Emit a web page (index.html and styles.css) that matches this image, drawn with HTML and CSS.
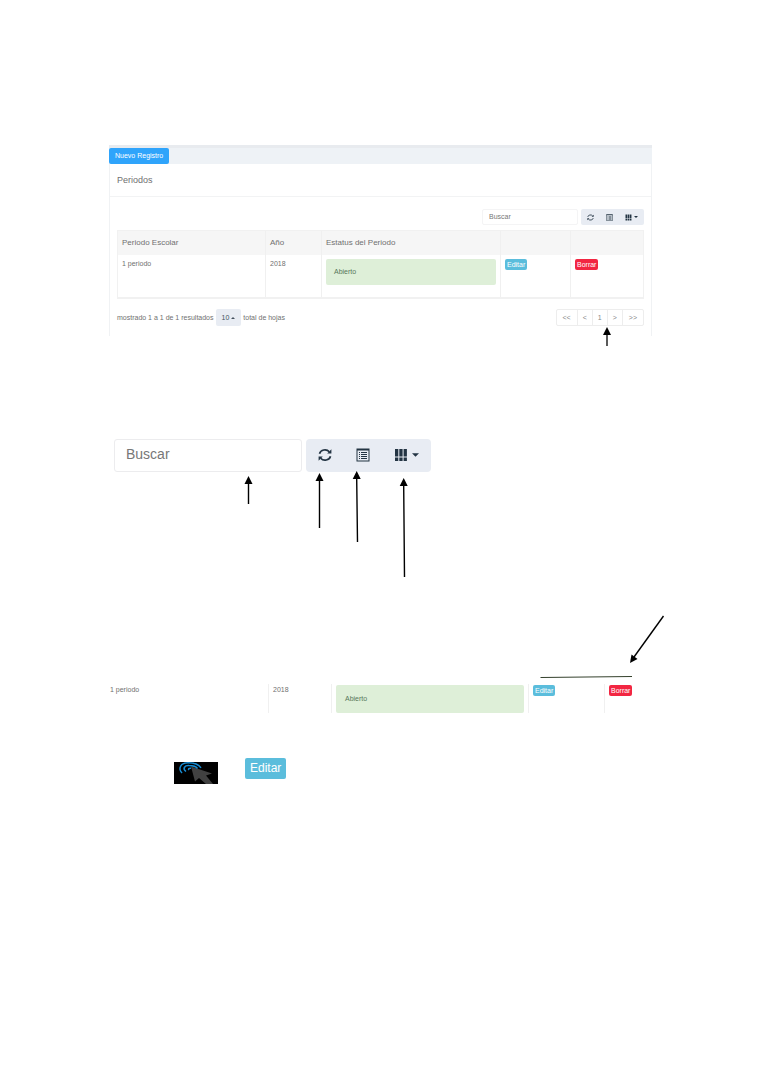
FILE: index.html
```html
<!DOCTYPE html>
<html lang="es">
<head>
<meta charset="utf-8">
<title>Periodos</title>
<link rel="stylesheet" href="styles.css">
</head>
<body>
<svg class="defs" aria-hidden="true">
  <symbol id="refresh" viewBox="0 0 14 14">
    <path d="M1.500 5.800A5.600 5.200 0 0 1 11.300 3.800M12.500 8.200A5.600 5.200 0 0 1 2.700 10.200" fill="none" stroke="currentColor" stroke-width="1.700"/>
    <path d="M13.400 1.300v4.200H9.200zM.6 12.700V8.500h4.200z" fill="currentColor"/>
  </symbol>
  <symbol id="list" viewBox="0 0 14 14">
    <path d="M.5 .5h13v13H.5zM1.500 2.500v10h11v-10z" fill="currentColor" fill-rule="evenodd"/>
    <path d="M3 4h1v1H3zM5 4h6v1H5zM3 6h1v1H3zM5 6h6v1H5zM3 8h1v1H3zM5 8h6v1H5zM3 10h1v1H3zM5 10h6v1H5z" fill="currentColor"/>
  </symbol>
  <symbol id="grid" viewBox="0 0 14 14">
    <path d="M1 1h3.300v7.500H1zM5.300 1h3.300v7.500H5.300zM9.600 1h3.300v7.500H9.600zM1 9.500h3.300V13H1zM5.300 9.500h3.300V13H5.300zM9.600 9.500h3.300V13H9.600z" fill="currentColor"/>
  </symbol>
  <symbol id="caret" viewBox="0 0 8 4"><path d="M0 0h8L4 4z" fill="currentColor"/></symbol>
</svg>
<main class="page">
  <section class="panel">
    <div class="topbar"><button class="new" type="button">Nuevo Registro</button></div>
    <div class="card">
      <h1 class="title">Periodos</h1>
      <div class="content">
        <div class="toolbar">
          <input class="search" type="text" placeholder="Buscar" aria-label="Buscar">
          <div class="tools">
            <button type="button" aria-label="Actualizar"><svg class="icon"><use href="#refresh"/></svg></button>
            <button type="button" aria-label="Cambiar vista"><svg class="icon"><use href="#list"/></svg></button>
            <button type="button" aria-label="Columnas"><svg class="icon"><use href="#grid"/></svg><svg class="caret"><use href="#caret"/></svg></button>
          </div>
        </div>
        <table class="grid">
          <thead><tr><th class="c1">Periodo Escolar</th><th class="c2">Año</th><th class="c3">Estatus del Periodo</th><th class="c4"></th><th class="c5"></th></tr></thead>
          <tbody><tr><td>1 periodo</td><td>2018</td><td><div class="status">Abierto</div></td><td><button class="tag edit" type="button">Editar</button></td><td><button class="tag delete" type="button">Borrar</button></td></tr></tbody>
        </table>
        <div class="footer">
          <span>mostrado 1 a 1 de 1 resultados</span>
          <button class="size" type="button">10<svg class="caret up"><use href="#caret"/></svg></button>
          <span>total de hojas</span>
          <nav class="pages" aria-label="Páginas"><a class="end" href="#">&lt;&lt;</a><a href="#">&lt;</a><a href="#">1</a><a href="#">&gt;</a><a class="end" href="#">&gt;&gt;</a></nav>
        </div>
      </div>
    </div>
    <svg class="arrow page-arrow" viewBox="0 0 10 20"><path d="M5 19V5" stroke="#000" stroke-width="1.3"/><path d="M5 0l4 8H1z"/></svg>
  </section>

  <section class="controls">
    <input class="search" type="text" placeholder="Buscar" aria-label="Buscar periodo">
    <div class="tools">
      <button type="button" aria-label="Actualizar"><svg class="icon"><use href="#refresh"/></svg></button>
      <button type="button" aria-label="Cambiar vista"><svg class="icon"><use href="#list"/></svg></button>
      <button type="button" aria-label="Columnas"><svg class="icon"><use href="#grid"/></svg><svg class="caret"><use href="#caret"/></svg></button>
    </div>
    <svg class="arrow control-arrows" viewBox="0 0 180 110">
      <path d="M8.500 33V12M79.500 57V10M117.500 71L116.700 8M164.500 106L163.700 15" fill="none" stroke="#000" stroke-width="1.4"/>
      <path d="M8.500 5l4 8h-8zM79.500 2l4 8h-8zM116.700 0l4 8h-8zM163.700 7l4 8h-8z"/>
    </svg>
  </section>

  <section class="sample">
    <table class="row">
      <tbody><tr><td class="r1">1 periodo</td><td class="r2">2018</td><td class="r3"><div class="status">Abierto</div></td><td class="r4"><button class="tag edit" type="button">Editar</button></td><td class="r5"><button class="tag delete" type="button">Borrar</button></td></tr></tbody>
    </table>
    <svg class="arrow row-arrow" viewBox="0 0 130 65">
      <path d="M127.500 1L98 42" stroke="#000" stroke-width="1.4"/>
      <path d="M94 48l1.500-8.500 6 4.500z"/>
      <path d="M4.500 62.500L96 61.500" stroke="#34412c" stroke-width="1"/>
    </svg>
  </section>

  <section class="action">
    <svg class="click" viewBox="0 0 44 22" role="img" aria-label="Clic">
      <path d="M0 0h44v22H0z"/>
      <path d="M17 4.500l4 15 4-3.500 7 6h7l-7-8.500 6-2z" fill="#414141"/>
      <g fill="none" stroke="#168bd2" stroke-width="1.500">
        <path d="M8 11C3.500 6 7 .8 14 .8c6 0 11 2 13 5"/>
        <path d="M12 9.500C8 6.500 11 3.200 15 3.500c4 0 7 1 8.500 3"/>
        <path d="M15 8c-1-1-.5-2 2-1.800"/>
      </g>
    </svg>
    <button class="tag edit large" type="button">Editar</button>
  </section>
</main>
</body>
</html>
```

FILE: styles.css
```css
* { box-sizing: border-box; }
body { margin: 0; background: #fff; color: #707070; font: 7px/10px "Liberation Sans", Arial, sans-serif; }
button, input { font: inherit; margin: 0; border: 0; padding: 0; }
button { cursor: pointer; }
.defs { position: absolute; width: 0; height: 0; }
.page { padding: 145px 109px 0; }

.panel { position: relative; }
.topbar { display: flex; height: 19px; border-top: 3px solid #e8ebef; background: #eef2f6; }
.new { padding: 0 6px; background: #2fa4fb; color: #fff; border-radius: 2px; }
.card { border: solid #f0f2f4; border-width: 0 1px; }
.title { margin: 0; padding: 10px 7px; font-size: 9px; line-height: 12px; font-weight: 400; border-bottom: 1px solid #f2f3f4; }
.content { padding: 12px 7px 10px; }

.toolbar { display: flex; justify-content: flex-end; gap: 3px; height: 16px; margin-bottom: 5px; }
.search { width: 96px; padding: 0 6px; border: 1px solid #f4f4f5; border-radius: 2px; background: #fff; color: #707070; }
.search::placeholder { color: #777; opacity: 1; }
.tools { display: flex; background: #e8ecf3; border-radius: 2px; color: #233443; }
.tools button { display: flex; align-items: center; justify-content: center; gap: 2px; padding: 0 6px; background: none; color: inherit; }
.icon { width: 7px; height: 7px; }
.caret { width: 4px; height: 2px; }
.up { transform: rotate(180deg); }

table { width: 100%; border-spacing: 0; table-layout: fixed; }
th, td { padding: 0 4px; text-align: left; vertical-align: top; font-weight: 400; }
.grid { border: solid #f1f1f1; border-width: 1px 1px 2px; }
.grid th { height: 24px; background: #f6f6f6; font-size: 8px; vertical-align: middle; }
.grid td { height: 42px; padding-top: 4px; }
.grid th + th, .grid td + td, .row td + td { border-left: 1px solid #f0f0f0; }
.grid .c1 { width: 28%; }
.grid .c2 { width: 56px; }
.grid .c4 { width: 70px; }
.grid .c5 { width: 73px; }
.status { padding: 8px; background: #deefd8; color: #56775a; border-radius: 2px; }
.tag { display: block; padding: 0 2px; color: #fff; border-radius: 2px; line-height: 11px; }
.edit { background: #5bbddc; }
.delete { background: #f22642; }

.footer { display: flex; align-items: center; gap: 2px; margin-top: 10px; height: 17px; }
.size { display: flex; align-items: center; gap: 2px; height: 17px; padding: 0 6px; background: #e8ecf3; color: #44505f; border-radius: 2px; }
.pages { display: flex; margin-left: auto; border: 1px solid #ededed; border-radius: 2px; }
.pages a { padding: 0 5px; line-height: 15px; color: #888; text-decoration: none; }
.pages .end { padding: 0 6px; }
.pages a + a { border-left: 1px solid #ededed; }

.arrow { position: absolute; }
.page-arrow { right: 40px; top: 182px; width: 10px; height: 20px; }

.controls { position: relative; display: flex; gap: 4px; height: 33px; margin: 103px 0 0 5px; font-size: 14px; line-height: 18px; }
.controls .search { width: 188px; padding: 0 11px 4px; border-color: #ececee; border-radius: 3px; }
.controls .tools { border-radius: 4px; }
.controls .tools button { gap: 4px; padding: 0 12px 2px; }
.controls .icon { width: 14px; height: 14px; }
.controls .caret { width: 7px; height: 4px; }
.control-arrows { left: 126px; top: 32px; width: 180px; height: 110px; }

.sample { position: relative; margin-top: 212px; }
.row td { padding-top: 1px; }
.row .r1 { width: 159px; padding-left: 1px; }
.row .r2 { width: 63px; }
.row .r4 { width: 76px; }
.row .r5 { width: 48px; }
.row .status { padding: 9px; }
.row-arrow { right: -14px; top: -69px; width: 130px; height: 65px; }

.action { display: flex; gap: 27px; align-items: flex-start; margin: 45px 0 0 65px; }
.click { width: 44px; height: 22px; margin-top: 4px; }
.large { padding: 0 5px; font-size: 12px; line-height: 21px; }
```
